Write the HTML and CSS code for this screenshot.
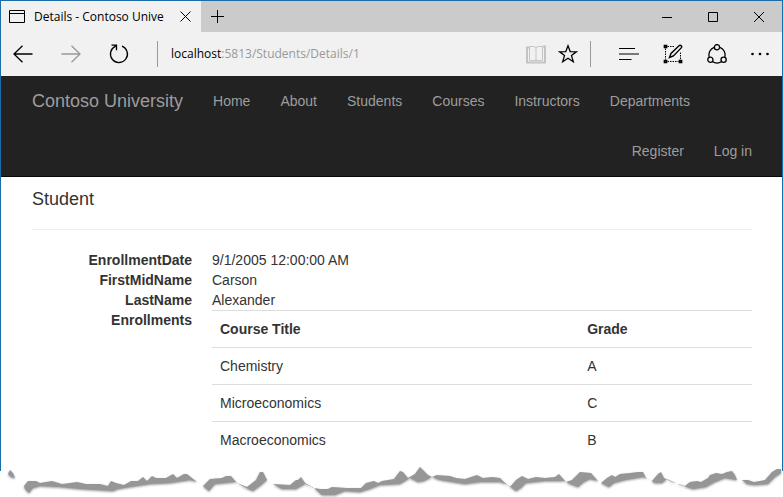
FILE: index.html
```html
<!DOCTYPE html>
<html lang="en">
<head>
<meta charset="utf-8">
<meta name="viewport" content="width=device-width, initial-scale=1">
<title>Details - Contoso University</title>
<link rel="stylesheet" href="styles.css">
</head>
<body>
<div class="window">
  <header class="tabstrip">
    <div class="tab">
      <svg class="icon" width="16" height="13" viewBox="0 0 16 13"><path d="M.5.5h15v12H.5zM.5 3.5h15"/></svg>
      <span class="tab-title">Details - Contoso Unive</span>
      <button class="tab-close" aria-label="Close tab"><svg class="icon" width="11" height="11" viewBox="0 0 11 11"><path d="M.5.5l10 10M10.500.5l-10 10"/></svg></button>
    </div>
    <button class="new-tab" aria-label="New tab"><svg class="icon" width="13" height="13" viewBox="0 0 13 13"><path d="M6.500 0v13M0 6.500h13"/></svg></button>
    <div class="window-controls">
      <button aria-label="Minimize"><svg class="icon" width="10" height="10" viewBox="0 0 10 10"><path d="M0 5.500h10"/></svg></button>
      <button aria-label="Maximize"><svg class="icon" width="10" height="10" viewBox="0 0 10 10"><path d="M.5.5h9v9h-9z"/></svg></button>
      <button aria-label="Close"><svg class="icon" width="10" height="10" viewBox="0 0 10 10"><path d="M0 0l10 10M10 0L0 10"/></svg></button>
    </div>
  </header>

  <div class="toolbar">
    <div class="history">
      <button aria-label="Back"><svg class="icon" width="20" height="18" viewBox="0 0 20 18"><path stroke-width="1.300" d="M19.500 9H1M9.500.7L1 9l8.500 8.300"/></svg></button>
      <button class="disabled" aria-label="Forward" disabled><svg class="icon" width="20" height="18" viewBox="0 0 20 18"><path stroke-width="1.300" d="M.5 9H19M10.500.7L19 9l-8.500 8.300"/></svg></button>
      <button aria-label="Refresh"><svg class="icon" width="20" height="20" viewBox="0 0 20 20"><path stroke-width="1.300" d="M13 2.100a8.500 8.500 0 1 1-6.800.3M2.500 1.200h5v5M7.300 1.400L4.500 3.600"/></svg></button>
    </div>
    <button class="address" aria-label="Address"><span class="host">localhost</span>:5813/Students/Details/1</button>
    <div class="page-tools">
      <button class="reading" aria-label="Reading view" disabled><svg class="icon" width="20" height="19" viewBox="0 0 20 19"><path stroke-width="2" d="M1 2.500h2M1 1.500v16h18v-16h-2"/><path d="M3.500 1.500h4q2 0 2.500 1.500.5-1.500 2.500-1.500h4v14H3.500zM10 3v12.500"/></svg></button>
      <button aria-label="Add to favorites"><svg class="icon" width="20" height="20" viewBox="0 0 20 20"><path stroke-width="1.300" d="M10 1.800l2.200 5.800 6.200.2-4.900 3.800 1.800 6.100L10 14.200l-5.300 3.500 1.800-6.100-4.900-3.800 6.200-.2z"/></svg></button>
    </div>
    <div class="hub-tools">
      <button aria-label="Hub"><svg class="icon" width="20" height="12" viewBox="0 0 20 12"><path d="M0 .5h16M0 6h20M0 11.500h12.500" stroke-width="1.200"/></svg></button>
      <button aria-label="Make a web note"><svg class="icon" width="20" height="20" viewBox="0 0 20 20"><path stroke-dasharray="1.500 1" d="M4.500 2.500h7M2.500 4.500v11M4.500 17.500h11M17.500 8.500v7"/><path stroke-width="1.700" d="M1.500 1.500h2v2h-2zM1.500 16.500h2v2h-2zM16.500 16.500h2v2h-2z"/><path stroke-width="1.400" d="M6.500 13.500l1.500-4 8-7.800q1.200-1 2.200 0t0 2.200l-7.800 8z"/></svg></button>
      <button aria-label="Share"><svg class="icon" width="20" height="20" viewBox="0 0 20 20"><path stroke-width="1.300" d="M7 3.300A8.200 8.200 0 0 0 2.200 13M13 3.300A8.200 8.200 0 0 1 17.800 13M5.300 17.500a8.500 8.500 0 0 0 9.400 0"/><g stroke-width="1.300"><circle cx="10" cy="3.200" r="2.600"/><circle cx="3.400" cy="15.700" r="2.600"/><circle cx="16.600" cy="15.700" r="2.600"/></g></svg></button>
      <button aria-label="More"><svg width="18" height="4" viewBox="0 0 18 4"><circle cx="1.500" cy="2" r="1.300"/><circle cx="9" cy="2" r="1.300"/><circle cx="16.500" cy="2" r="1.300"/></svg></button>
    </div>
  </div>

  <nav class="navbar">
    <div class="nav-row">
      <a class="brand" href="#">Contoso University</a>
      <a href="#">Home</a>
      <a href="#">About</a>
      <a href="#">Students</a>
      <a href="#">Courses</a>
      <a href="#">Instructors</a>
      <a href="#">Departments</a>
    </div>
    <div class="nav-row nav-account">
      <a href="#">Register</a>
      <a href="#">Log in</a>
    </div>
  </nav>

  <main class="content">
    <h4>Student</h4>
    <hr>
    <dl class="details">
      <dt>EnrollmentDate</dt><dd>9/1/2005 12:00:00 AM</dd>
      <dt>FirstMidName</dt><dd>Carson</dd>
      <dt>LastName</dt><dd>Alexander</dd>
      <dt>Enrollments</dt>
      <dd>
        <table>
          <thead><tr><th class="course">Course Title</th><th>Grade</th></tr></thead>
          <tbody>
            <tr><td>Chemistry</td><td>A</td></tr>
            <tr><td>Microeconomics</td><td>C</td></tr>
            <tr><td>Macroeconomics</td><td>B</td></tr>
          </tbody>
        </table>
      </dd>
    </dl>
  </main>
</div>

<svg class="torn-edge" viewBox="0 460 783 37" aria-hidden="true">
  <defs>
    <filter id="soft" x="-2%" y="-20%" width="104%" height="140%"><feGaussianBlur stdDeviation="1"/></filter>
    <path id="tear" d="M8 474L10 470 13 473 15 478 11 477z
      M24 486L28 481H36L40 483 52 481 62 484 70 483 77 482 86 484H100L108 486 111 481 116 483 124 485 131 481H138L143 477 147 481 152 476 156 478H166L173 474 177 478 184 474H187L197 482 190 480 170 483 150 484 130 487 118 489 113 491 80 489 60 487 40 486 33 488 29 493 25 489z
      M203 486L210 479 222 478 226 476H231L237 483 247 487 256 480 260 472H263L267 480 260 486 253 491 246 488 235 482 215 484 209 491z
      M273 484L290 485 296 480 298 480 301 477 305 483 314 488 320 489 328 489 332 487 347 488H361L366 483 374 481 378 483 382 481 394 479 400 471 403 472 408 478 415 474 420 467 428 475 432 477 437 475 450 476 456 478 465 479 477 475 483 478 492 477 500 478 504 482 510 487 516 480 522 476 528 479 536 477 545 478 555 477 559 474 566 482 572 480 580 472 591 473 598 481 590 479 584 482 578 487 570 484 564 481 545 481 526 483 521 488 516 491 508 485 500 482 480 482 465 484 440 480 432 477 424 481 418 482 410 478 400 484 380 485 370 489 360 492 345 491 335 495 322 495 314 488 305 484 296 489 282 489z
      M601 483L607 478 612 475 615 477 620 474 630 473 638 472 643 472 646 478 652 481 658 474 661 472 664 478 672 482 685 486 690 482 697 481 701 482 708 478 710 475 716 473 722 474 727 472 732 471 735 475 737 480 725 478 715 482 706 487 693 489 680 485 667 479 662 483 655 483 650 480 643 477 625 480 614 483 609 487z
      M742 480L748 480 754 482 765 480 772 472 777 469H781V473L775 477 768 484 755 485 747 484z"/>
  </defs>
  <use href="#tear" y="1" fill="#999" filter="url(#soft)"/>
  <use href="#tear" fill="#969696"/>
</svg>
</body>
</html>
```

FILE: styles.css
```css
* {
  box-sizing: border-box;
}

body {
  margin: 0;
  background: #fff;
  color: #333;
  font: 14px/20px "Liberation Sans", Arial, sans-serif;
}

button {
  display: flex;
  align-items: center;
  justify-content: center;
  padding: 0;
  border: 0;
  background: none;
  color: #000;
  font: inherit;
}

.icon {
  fill: none;
  stroke: currentColor;
}

.window {
  border: 1px solid #1a6cab;
  border-bottom: 0;
}

.tabstrip {
  display: flex;
  height: 31px;
  background: #cbcbcb;
  font: 12px/20px "Open Sans", "Noto Sans", sans-serif;
  color: #000;
}

.tab {
  display: flex;
  align-items: center;
  gap: 9px;
  width: 200px;
  padding: 0 10px 0 8px;
  background: #f1f1f1;
}

.tab-title {
  flex: 1;
  white-space: nowrap;
}

.new-tab {
  width: 33px;
}

.window-controls {
  display: flex;
  margin-left: auto;
}

.window-controls button {
  width: 46px;
}

.toolbar {
  display: flex;
  align-items: center;
  height: 44px;
  padding-right: 13px;
  background: #f1f1f1;
}

.history {
  display: flex;
  gap: 28px;
  padding: 0 28px 0 12px;
}

.address {
  flex: 1;
  justify-content: flex-start;
  height: 26px;
  padding-left: 13px;
  border-left: 1px solid #999;
  color: #999;
  font: 12px/20px "Open Sans", "Noto Sans", sans-serif;
}

.host {
  color: #000;
}

.disabled {
  color: #999;
}

.reading {
  color: #c4c4c4;
}

.page-tools {
  display: flex;
  align-items: center;
  gap: 12px;
  height: 26px;
  padding-right: 12px;
  border-right: 1px solid #999;
}

.hub-tools {
  display: flex;
  align-items: center;
  gap: 24px;
  padding-left: 28px;
}

.navbar {
  padding: 0 15px 0 16px;
  border-bottom: 1px solid #080808;
  background: #222;
}

.nav-row {
  display: flex;
}

.nav-account {
  justify-content: flex-end;
}

.navbar a {
  padding: 15px;
  color: #9d9d9d;
  text-decoration: none;
}

.navbar .brand {
  font-size: 18px;
}

.content {
  padding: 12px 30px 13px 31px;
}

h4 {
  margin: 0;
  font-size: 18px;
  font-weight: 400;
}

hr {
  margin: 20px 0;
  border: 0;
  border-top: 1px solid #eee;
}

.details {
  display: grid;
  grid-template-columns: 160px 1fr;
  column-gap: 20px;
  margin: 0;
}

dt {
  font-weight: 700;
  text-align: right;
}

dd {
  margin: 0;
}

table {
  width: 100%;
  border-spacing: 0;
}

th,
td {
  padding: 8px;
  border-top: 1px solid #ddd;
  text-align: left;
}

.course {
  width: 68%;
}

.torn-edge {
  display: block;
  width: 100%;
  margin-top: -11px;
}
```
